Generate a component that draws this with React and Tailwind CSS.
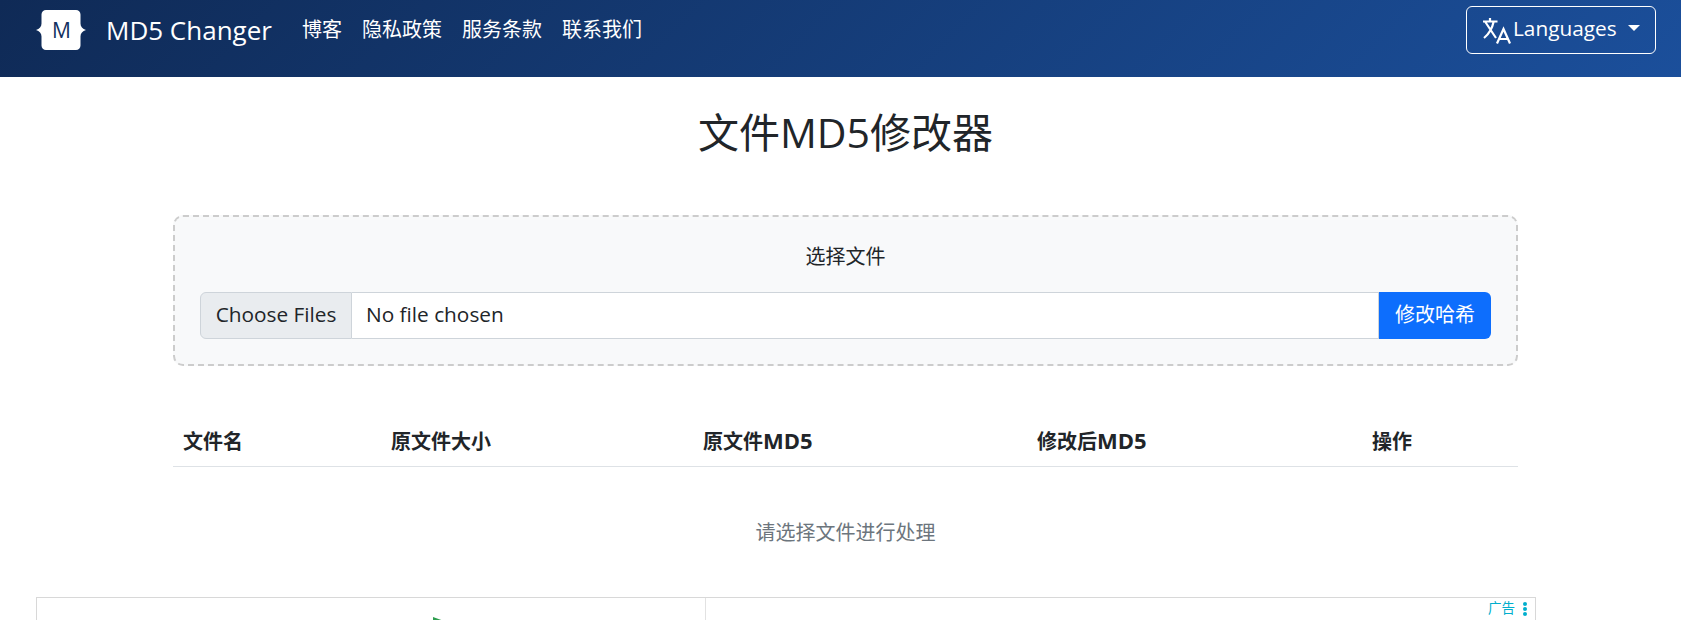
const font = { fontFamily: '"Open Sans", "Noto Sans CJK SC", sans-serif' };

function Logo() {
    return (
        <div className="relative w-[50px] h-[40px] flex items-center justify-center">
            <svg className="absolute inset-0" width="50" height="40" viewBox="0 0 50 40" fill="#fff">
                <path d="M10 0h30a4.500 4.500 0 0 1 4.500 4.500v9c0 3 2 5.500 5.500 6.500c-3.500 1-5.500 3.500-5.500 6.500v9a4.500 4.500 0 0 1-4.500 4.500H10a4.500 4.500 0 0 1-4.500-4.500v-9c0-3-2-5.500-5.500-6.500c3.500-1 5.500-3.500 5.500-6.500v-9A4.500 4.500 0 0 1 10 0z" />
            </svg>
            <span className="relative pl-[1px] text-[21px] font-medium text-[#12305f] leading-none">M</span>
        </div>
    );
}

function TranslateIcon() {
    return (
        <svg className="mt-[4px]" width="28" height="28" viewBox="0 0 28 28" fill="none" stroke="#fff" strokeWidth="2.200">
            <path d="M0 4.500h14.500M7 1v3.500M2 4.500L13 21M10.700 4.500Q8.500 15 1 21" />
            <path d="M14 26.500L20.500 12l6.500 14.500M16 22h9" />
        </svg>
    );
}

export default function App() {
    return (
        <div className="h-[620px] overflow-hidden bg-white text-[#212529] text-[20px]" style={font}>
            <nav className="h-[77px] bg-[linear-gradient(135deg,#0f2a56,#1b4f9b)] flex items-start justify-between pl-[36px] pr-[25px] text-white">
                <div className="flex items-center pt-[10px]">
                    <Logo />
                    <span className="ml-[20px] text-[26px] leading-[40px]">MD5 Changer</span>
                    <div className="ml-[30px] flex gap-[20px] leading-[40px]">
                        <span>博客</span>
                        <span>隐私政策</span>
                        <span>服务条款</span>
                        <span>联系我们</span>
                    </div>
                </div>
                <button className="mt-[6px] w-[190px] h-[48px] border border-white rounded-[6px] flex items-center pl-[16px] pb-[3px]">
                    <TranslateIcon />
                    <span className="ml-[2px] text-[20.800px]">Languages</span>
                    <span className="ml-[11px] mb-[1px] w-0 h-0 border-x-[6px] border-x-transparent border-t-[6px] border-t-white" />
                </button>
            </nav>

            <main className="w-[1345px] ml-[173px]">
                <h1 className="mt-[31px] text-center text-[41px] leading-[48px]">文件MD5修改器</h1>

                <div className="mt-[59px] h-[151px] border-2 border-dashed border-[#ccc] rounded-[10px] bg-[#f8f9fa] px-[25px] pt-[26px]">
                    <div className="text-center leading-[27px] mb-[22px]">选择文件</div>
                    <div className="flex h-[47px] text-[20.800px]">
                        <div className="w-[152px] pb-[2px] flex items-center justify-center bg-[#e9ecef] border border-[#ced4da] rounded-l-[6px]">Choose Files</div>
                        <div className="flex-1 pb-[2px] flex items-center pl-[14px] bg-white border-y border-r border-[#ced4da]">No file chosen</div>
                        <button className="w-[112px] pb-[2px] bg-[#0d6efd] text-white text-[20px] rounded-r-[6px]">修改哈希</button>
                    </div>
                </div>

                <table className="mt-[48px] w-full table-fixed">
                    <thead>
                        <tr className="border-b border-[#dee2e6] h-[52px] text-left">
                            <th className="w-[209px] pl-[10px] pt-[5px] font-bold">文件名</th>
                            <th className="w-[312px] pl-[9px] pt-[5px] font-bold">原文件大小</th>
                            <th className="w-[334px] pl-[9px] pt-[5px] font-bold">原文件<span className="text-[22px] leading-none">MD5</span></th>
                            <th className="w-[335px] pl-[9px] pt-[5px] font-bold">修改后<span className="text-[22px] leading-none">MD5</span></th>
                            <th className="pl-[9px] pt-[5px] font-bold">操作</th>
                        </tr>
                    </thead>
                    <tbody>
                        <tr>
                            <td colSpan={5} className="h-[131px] pt-[2px] text-center text-[#6c757d]">请选择文件进行处理</td>
                        </tr>
                    </tbody>
                </table>
            </main>

            <div className="ml-[36px] w-[1500px] h-[30px] border-t border-l border-[#d8d8d8] flex">
                <div className="w-[669px] border-r border-[#e2e2e2] pl-[396px] pt-[19px]">
                    <svg width="11" height="4" viewBox="0 0 11 4"><path d="M0 0l11 4H0z" fill="#2e9e4f" /></svg>
                </div>
                <div className="flex-1 border-r border-[#d8d8d8] flex justify-end items-start pr-[7px] pt-[2px] text-[13.500px] leading-[16px] text-[#00aecd]">
                    <span>广告</span>
                    <svg className="ml-[7px] mt-[2px]" width="6" height="14" viewBox="0 0 6 14" fill="#00aecd"><circle cx="3" cy="2" r="2" /><circle cx="3" cy="7" r="2" /><circle cx="3" cy="12" r="2" /></svg>
                </div>
            </div>
        </div>
    );
}
